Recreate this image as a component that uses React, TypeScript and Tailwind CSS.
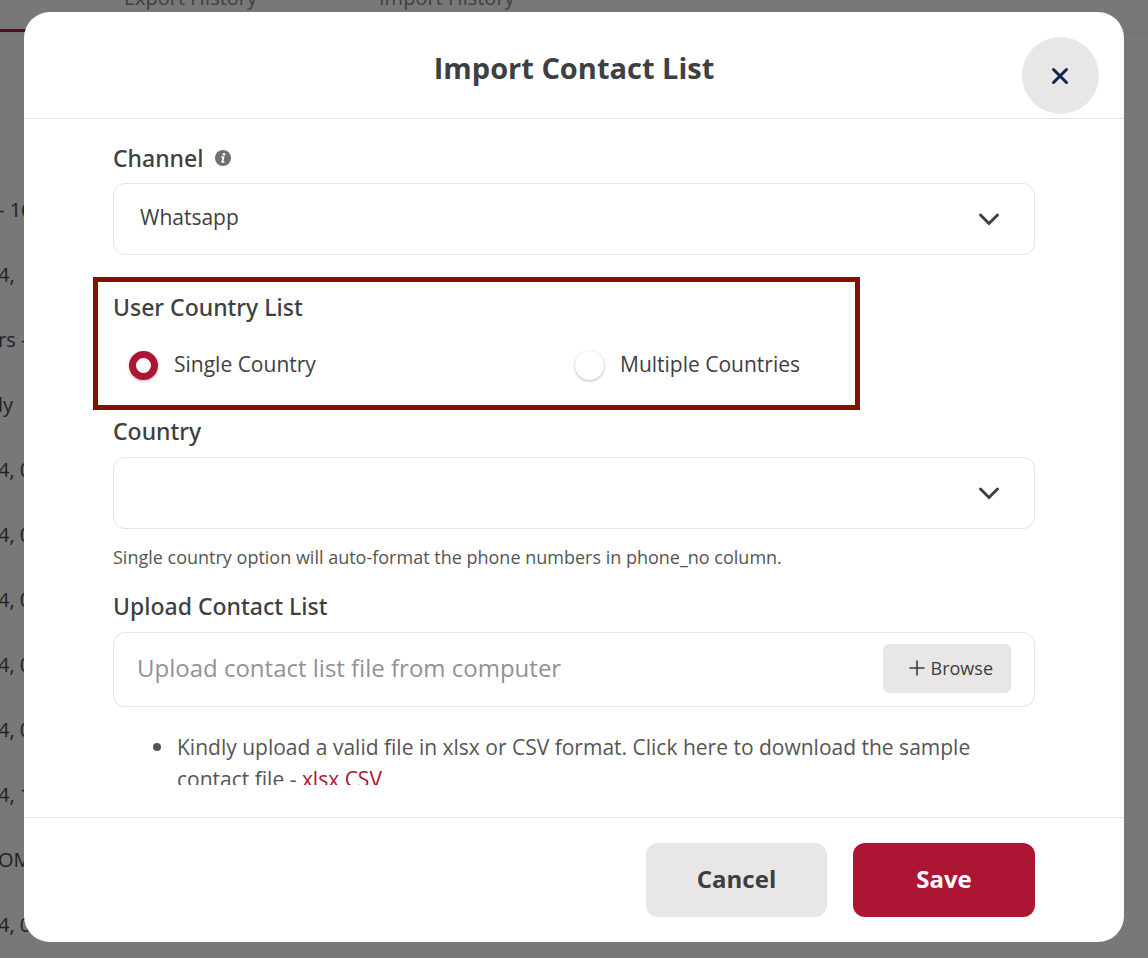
import { useState } from "react";

const rows = ["- 16", "4,", "rs -", "ly", "4, 0", "4, 0", "4, 0", "4, 0", "4, 0", "4, 1", "OM", "4, 0"];

function InfoIcon() {
  return (
    <svg aria-hidden="true" viewBox="0 0 16 16" className="size-4" fill="none">
      <circle cx="8" cy="8" r="8" fill="#707070" />
      <circle cx="9" cy="4.2" r="1.3" fill="#fff" />
      <path d="M6.2 7h2.3L7.3 11.9h2" stroke="#fff" strokeWidth="1.7" />
    </svg>
  );
}

function Chevron() {
  return (
    <svg
      aria-hidden="true"
      viewBox="0 0 24 16"
      className="pointer-events-none absolute top-1/2 right-[34px] h-4 w-6 -translate-y-1/2"
      fill="none"
      stroke="#3e3f40"
      strokeWidth="3"
      strokeLinecap="round"
      strokeLinejoin="miter"
    >
      <path d="M3.5 4 12 12.5 20.5 4" />
    </svg>
  );
}

function SelectField({ id, options }: { id: string; options: string[] }) {
  return (
    <div className="relative">
      <select
        id={id}
        className="block h-[72px] w-full appearance-none rounded-xl border border-[#e4e4e4] bg-white pr-16 pb-0.5 pl-[26px] text-[21px] text-[#3e3f40] outline-none"
      >
        {options.map((option) => (
          <option key={option}>{option}</option>
        ))}
      </select>
      <Chevron />
    </div>
  );
}

function RadioOption({ label, checked, onChange }: { label: string; checked: boolean; onChange: () => void }) {
  return (
    <label className="flex items-center gap-4 text-[21px] leading-[30px] text-[#3e3f40]">
      <input
        type="radio"
        name="country-mode"
        checked={checked}
        onChange={onChange}
        className="size-[29px] shrink-0 appearance-none rounded-full border-0 border-[#ad1535] bg-white shadow-[0_1px_3px_rgba(0,0,0,0.3)] checked:border-[7px]"
      />
      <span className="pb-0.5">{label}</span>
    </label>
  );
}

function Backdrop() {
  return (
    <div aria-hidden="true" className="absolute inset-0 overflow-hidden bg-[#f0f0f0] text-[#444]">
      <div className="flex h-[33px] items-start border-b border-[#e6e6e6] text-xl text-[#808080]">
        <div className="h-8 w-[60px] border-b-3 border-[#ad1535]" />
        <div className="-mt-4 flex gap-[122px] pl-16 leading-7">
          <span>Export History</span>
          <span>Import History</span>
        </div>
      </div>
      <div className="-ml-0.5 flex flex-col pt-36 text-xl">
        {rows.map((row, index) => (
          <div key={index} className="h-[65px] leading-[65px] whitespace-nowrap">
            {row}
          </div>
        ))}
      </div>
      <div className="absolute inset-0 bg-black/50" />
    </div>
  );
}

export default function App() {
  const [mode, setMode] = useState("single");
  const labelClass = "block font-['Noto_Sans',sans-serif] text-[23px] leading-8 font-medium text-[#3e3f40]";

  return (
    <div className="relative h-screen font-['Open_Sans','Noto_Sans',sans-serif]">
      <Backdrop />
      <div className="relative flex h-full flex-col px-6 pt-3 pb-4">
        <div
          role="dialog"
          aria-labelledby="dialog-title"
          className="flex min-h-0 flex-1 flex-col overflow-hidden rounded-[26px] bg-white"
        >
          <header className="relative flex h-[107px] shrink-0 items-center justify-center border-b border-[#e4e4e4] pt-1.5">
            <h1 id="dialog-title" className="text-[29px] leading-10 font-bold text-[#3e3f40]">
              Import Contact List
            </h1>
            <button
              type="button"
              aria-label="Close"
              className="absolute top-[25px] right-[25px] flex size-[77px] items-center justify-center rounded-full bg-[#e8e6e7] pr-px"
            >
              <svg viewBox="0 0 18 18" className="size-[18px]" fill="none" stroke="#12234a" strokeWidth="3" strokeLinecap="round">
                <path d="M2.5 2.5 15.5 15.5M15.5 2.5 2.5 15.5" />
              </svg>
            </button>
          </header>

          <form className="mb-8 min-h-0 flex-1 overflow-hidden px-[89px] pt-[23px]">
            <div className="flex items-center gap-3 pb-[9px]">
              <label htmlFor="channel" className={labelClass}>
                Channel
              </label>
              <InfoIcon />
            </div>
            <SelectField id="channel" options={["Whatsapp"]} />

            <div role="radiogroup" aria-labelledby="country-list" className="relative mt-[22px] h-[133px] pt-[14px]">
              <div id="country-list" className={labelClass}>
                User Country List
              </div>
              <div className="grid grid-cols-2 pt-[26px] pr-[14px] pl-4">
                <RadioOption label="Single Country" checked={mode === "single"} onChange={() => setMode("single")} />
                <RadioOption label="Multiple Countries" checked={mode === "multiple"} onChange={() => setMode("multiple")} />
              </div>
              <div className="pointer-events-none absolute inset-y-0 right-[175px] -left-5 border-5 border-[#851004]" />
            </div>

            <label htmlFor="country" className={`${labelClass} pt-[5px] pb-2.5`}>
              Country
            </label>
            <SelectField id="country" options={[""]} />
            <p className="pt-[14px] text-lg leading-7 text-[#555]">
              Single country option will auto-format the phone numbers in phone_no column.
            </p>

            <label htmlFor="upload" className={`${labelClass} pt-[19px] pb-2.5`}>
              Upload Contact List
            </label>
            <div className="flex h-[75px] items-center rounded-xl border border-[#e4e4e4] px-[23px]">
              <input
                id="upload"
                type="text"
                readOnly
                placeholder="Upload contact list file from computer"
                className="min-w-0 flex-1 pb-1 text-2xl text-[#3e3f40] outline-none placeholder:text-[#929292]"
              />
              <button
                type="button"
                className="mb-0.5 flex h-[49px] w-32 items-center justify-end gap-1.5 rounded-md bg-[#e8e6e7] pr-[18px] pb-0.5 text-lg text-[#3e3f40]"
              >
                <svg viewBox="0 0 16 16" className="size-4" fill="none" stroke="currentColor" strokeWidth="1.6">
                  <path d="M8 .5v15M.5 8h15" />
                </svg>
                Browse
              </button>
            </div>

            <ul className="pt-6 pl-16 text-[21px] leading-8 text-[#555]">
              <li className="relative before:absolute before:top-3 before:-left-6 before:size-2 before:rounded-full before:bg-[#555]">
                Kindly upload a valid file in xlsx or CSV format. Click here to download the sample contact file -{" "}
                <a href="#xlsx" className="text-[#ad1535]">
                  xlsx
                </a>{" "}
                <a href="#csv" className="text-[#ad1535]">
                  CSV
                </a>
              </li>
            </ul>
          </form>

          <footer className="flex shrink-0 justify-end gap-[26px] border-t border-[#e4e4e4] px-[89px] py-[25px] text-2xl font-bold">
            <button type="button" className="h-[74px] w-[181px] rounded-xl bg-[#e8e6e7] pb-0.5 text-[#3e3f40]">
              Cancel
            </button>
            <button type="submit" className="h-[74px] w-[182px] rounded-xl bg-[#ad1535] pb-0.5 text-white">
              Save
            </button>
          </footer>
        </div>
      </div>
    </div>
  );
}
